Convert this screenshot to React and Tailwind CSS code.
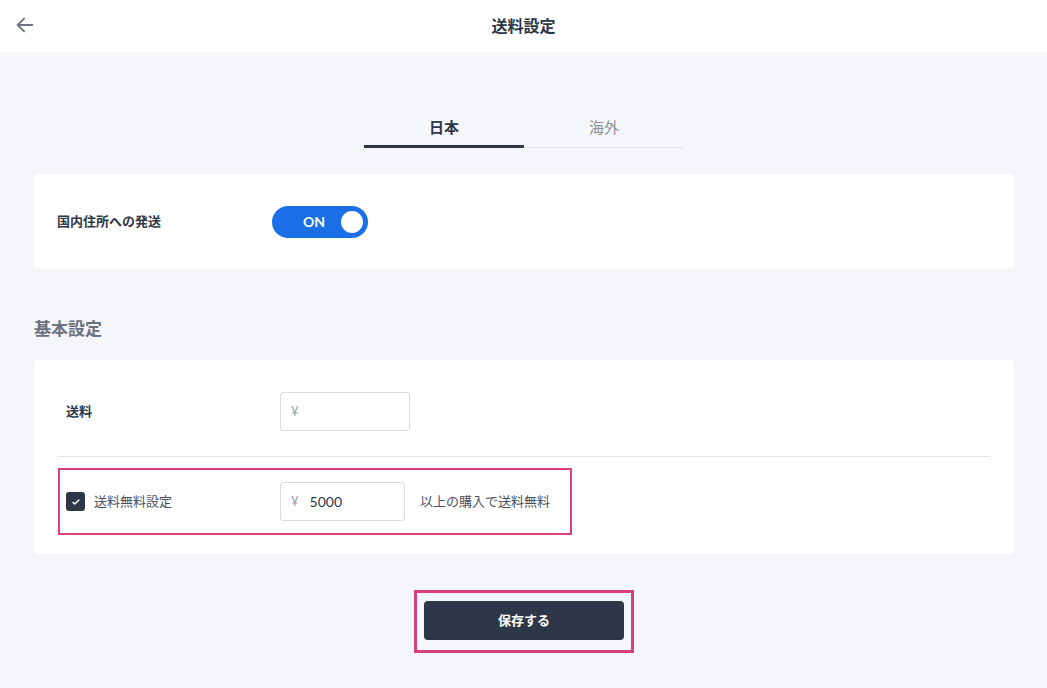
import React, { useState } from "react";

const font = { fontFamily: 'Lato, "Noto Sans CJK JP", sans-serif' };

const BackArrow = () => (
  <svg width="22" height="22" viewBox="0 0 24 24" fill="none" stroke="#6b7280" strokeWidth="2" strokeLinecap="round" strokeLinejoin="round">
    <path d="M20 12H4" />
    <path d="M11 5l-7 7 7 7" />
  </svg>
);

const YenInput = ({ value, width }) => (
  <div className={`flex items-center h-[39px] ${width} border border-[#d9dce1] rounded-[3px] bg-white px-[10px] text-[13px]`}>
    <span className="text-[#9ca3af]">¥</span>
    {value && <span className="ml-[11px] text-[14px] text-[#2d3748]">{value}</span>}
  </div>
);

export default function App() {
  const [tab, setTab] = useState("jp");
  const [on, setOn] = useState(true);
  const [free, setFree] = useState(true);

  return (
    <div className="min-h-[688px] bg-[#f5f6f9] text-[#2d3748]" style={font}>
      {/* Header */}
      <header className="relative h-[52px] bg-white flex items-center justify-center">
        <button className="absolute left-[14px] top-[14px]" aria-label="back">
          <BackArrow />
        </button>
        <h1 className="text-[16px] font-bold text-[#2d3748]">送料設定</h1>
      </header>

      <div className="pl-[34px] pr-[33px]">
        {/* Tabs */}
        <div className="flex justify-center pt-[58px]">
          {[
            ["jp", "日本"],
            ["intl", "海外"],
          ].map(([key, label]) => (
            <button
              key={key}
              onClick={() => setTab(key)}
              className={
                tab === key
                  ? "w-[160px] h-[38px] text-[15px] font-bold text-[#2d3748] border-b-[3px] border-[#2d3748]"
                  : "w-[160px] h-[38px] pb-[2px] text-[15px] text-[#8a9099] border-b border-[#e3e5e9]"
              }
            >
              {label}
            </button>
          ))}
        </div>

        {/* Domestic shipping */}
        <div className="mt-[26px] h-[95px] bg-white rounded-[4px] flex items-center px-[23px]">
          <span className="w-[215px] text-[13px] font-bold">国内住所への発送</span>
          <button
            onClick={() => setOn(!on)}
            className="relative w-[96px] h-[32px] rounded-full bg-[#1a6fe6] flex items-center"
          >
            <span className="ml-[31px] text-[14px] font-bold text-white">ON</span>
            <span className="absolute right-[5px] top-[5px] w-[22px] h-[22px] rounded-full bg-white" />
          </button>
        </div>

        {/* Basic settings */}
        <h2 className="mt-[48px] text-[17px] leading-[24px] font-bold text-[#6b7280]">基本設定</h2>

        <div className="mt-[19px] bg-white rounded-[4px] px-[24px] pt-[32px] pb-[19px]">
          <div className="flex items-center px-[8px]">
            <span className="w-[214px] text-[13px] font-bold">送料</span>
            <YenInput width="w-[130px]" />
          </div>
          <div className="mt-[25px] border-t border-[#e5e7eb]" />
          <div className="mt-[11px] inline-flex items-center border-[2px] border-[#d6407c] pl-[6px] pr-[20px] py-[12px]">
            <div className="w-[214px] flex items-center">
              <button
                onClick={() => setFree(!free)}
                className="w-[19px] h-[19px] rounded-[3px] bg-[#2d3748] flex items-center justify-center"
              >
                {free && (
                  <svg width="10" height="10" viewBox="0 0 24 24" fill="none" stroke="white" strokeWidth="3.5" strokeLinecap="round" strokeLinejoin="round">
                    <path d="M5 13l4 4L19 7" />
                  </svg>
                )}
              </button>
              <span className="ml-[9px] text-[13px] text-[#4a5160]">送料無料設定</span>
            </div>
            <YenInput width="w-[125px]" value="5000" />
            <span className="ml-[15px] text-[13px] text-[#4a5160]">以上の購入で送料無料</span>
          </div>
        </div>

        {/* Save */}
        <div className="mt-[36px] flex justify-center">
          <div className="border-[3px] border-[#d6407c] pl-[7px] pr-[7px] pt-[8px] pb-[10px]">
            <button className="w-[200px] h-[39px] rounded-[4px] bg-[#2d3748] text-white text-[13px] font-bold">
              保存する
            </button>
          </div>
        </div>
      </div>
    </div>
  );
}
